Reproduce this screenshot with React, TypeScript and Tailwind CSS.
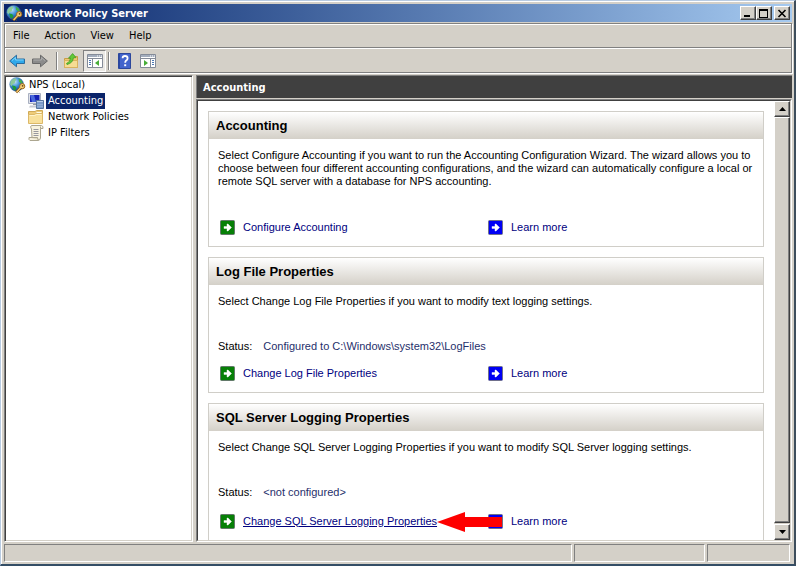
import type { ReactNode } from "react";

const tahoma = "font-['DejaVu_Sans_Condensed','DejaVu_Sans',sans-serif]";
const raised =
  "border border-t-white border-l-white border-r-[#404040] border-b-[#404040] bg-[#d4d0c8] shadow-[inset_-1px_-1px_0_#808080]";

function GlobeKeyIcon() {
  return (
    <svg width="17" height="17" viewBox="0 0 17 17" aria-hidden="true" className="shrink-0">
      <defs>
        <radialGradient id="globe" cx="35%" cy="30%" r="75%">
          <stop offset="0" stopColor="#c9e6fb" />
          <stop offset="0.5" stopColor="#3b8fd6" />
          <stop offset="1" stopColor="#0a2f7a" />
        </radialGradient>
      </defs>
      <circle cx="7.6" cy="7.4" r="6.9" fill="url(#globe)" stroke="#4c7ba6" strokeWidth="0.5" />
      <path d="M1.6 4.6Q3.4 1.6 6.4 1.2L7.4 2.6L6 4.4L5.8 6.2L3.8 7L2.8 9L1.2 8Z" fill="#8cc99a" />
      <path d="M3 8.6L6 9L7.4 10.6L6.4 13.6L4.4 12.8Z" fill="#1d9a3c" />
      <path d="M9.6 1.6L12.8 3.8L14 6.6L11.6 6L10 4.4Z" fill="#3fae48" />
      <path d="M11.6 10.6L7.2 15.4" stroke="#8a5a12" strokeWidth="2.6" />
      <circle cx="13.2" cy="9.2" r="2.6" fill="#f5cf7a" stroke="#9a6518" strokeWidth="1" />
      <path d="M11.8 10.4L7.6 15" stroke="#f5cf7a" strokeWidth="1.2" />
      <path d="M9 14L10.4 15.4" stroke="#9a6518" />
      <circle cx="13.6" cy="8.8" r="0.9" fill="#6b4510" />
    </svg>
  );
}

function ComputerIcon() {
  return (
    <svg width="16" height="16" viewBox="0 0 16 16" aria-hidden="true">
      <path d="M0.5 0.5H12.5V10.5H0.5Z" fill="#dfe2ea" stroke="#a9b0c0" />
      <path d="M2 2H11.5V9H2Z" fill="#1420b4" />
      <path d="M2 2H6L8 9H4Z" fill="#4a68dc" />
      <path d="M5 11H8V12H5Z" fill="#8f96a6" />
      <path d="M2 12.5H8V14.5H1Z" fill="#c6cad4" />
      <path d="M8.5 7.5H15.5V15.5H8.5Z" fill="#7d9cca" stroke="#56759f" />
      <path d="M9 8.5H15" stroke="#b8cdea" />
      <path d="M9 11.5H15M9 13.5H15" stroke="#92aed6" />
    </svg>
  );
}

function FolderIcon() {
  return (
    <svg width="16" height="16" viewBox="0 0 16 16" aria-hidden="true">
      <path d="M0.5 2.5H7L8.5 1.5H14.5V13.5H0.5Z" fill="#eecb78" stroke="#cfa955" />
      <path d="M8.5 3.5H13.5" stroke="#fffbe6" />
      <path d="M0.5 5.5H6.5L8 4.5H14.5V14.5H0.5Z" fill="#f8e09b" stroke="#dcb868" />
      <path d="M1.5 6.5H6.8L8.4 5.5H13.5" fill="none" stroke="#fff4cb" />
    </svg>
  );
}

function ScrollIcon() {
  return (
    <svg width="16" height="16" viewBox="0 0 16 16" aria-hidden="true">
      <path d="M4 0.5H13.5Q15.5 1 15 3.5H12.5V13Q12 15.5 10 15.5H2Q0.5 15 1 12.5H4L3.5 4Q1.5 1 4 0.5Z" fill="#f8f3e0" stroke="#aca690" />
      <path d="M1 12.5H9.5Q9.5 15.5 11 15" fill="#e3dcc2" stroke="#aca690" />
      <path d="M5.5 4.5H10.5M5.5 6.5H10.5M5.5 8.5H10.5M5.5 10.5H10.5" stroke="#98989e" />
      <path d="M12.5 3.5V1.5" stroke="#aca690" />
    </svg>
  );
}

function ToolArrow({ forward = false }: { forward?: boolean }) {
  const shape = forward
    ? "M0.5 5H8.5V1.2L15.4 7L8.5 12.8V9.5H0.5Z"
    : "M15.5 5H7.5V1.2L0.6 7L7.5 12.8V9.5H15.5Z";
  return (
    <svg width="16" height="14" viewBox="0 0 16 14" aria-hidden="true">
      <path d={shape} fill={forward ? "#8b8b8b" : "#2fa8ea"} stroke={forward ? "#686868" : "#2b6c9f"} strokeLinejoin="round" />
      <path d={forward ? "M1.5 6H9.4V3.4L13 6.6" : "M14.5 6H6.6V3.4L3 6.6"} fill="none" stroke={forward ? "#adadad" : "#7dd3f8"} />
    </svg>
  );
}

function UpFolderIcon() {
  return (
    <svg width="15" height="16" viewBox="0 0 15 16" aria-hidden="true">
      <path d="M0.5 5.5H6L7.5 3.5H13.5V14.5H0.5Z" fill="#edc873" stroke="#c99c45" />
      <path d="M0.5 7.5H13.5V14.5H0.5Z" fill="#f7dc93" stroke="#d9b25e" />
      <path d="M2.5 10.5Q6.5 9 6.5 5L4.5 5.2L8.6 0.6L12 4.6L9.4 4.8Q9 10 3 11.5Z" fill="#62c93a" stroke="#3c9a22" strokeWidth="0.8" />
    </svg>
  );
}

function PaneIcon({ play = false }: { play?: boolean }) {
  return (
    <svg width="16" height="14" viewBox="0 0 16 14" aria-hidden="true">
      <path d="M0.5 0.5H15.5V13.5H0.5Z" fill="#fff" stroke="#848b98" />
      <path d="M1 1H15V3H1Z" fill="#a3adbd" />
      <path d="M10 2H11M12 2H13M14 2H15" stroke="#fff" />
      <path d="M1 4.5H15" stroke="#848b98" />
      <path d={play ? "M10.5 5V13" : "M5.5 5V13"} stroke="#848b98" />
      <path d={play ? "M12 6.5H14M12 8.5H14M12 10.5H14" : "M2 6.5H4M2 8.5H4M2 10.5H4"} stroke="#4c78b4" />
      <path d={play ? "M4 6L8 9L4 12Z" : "M12 6L8 9L12 12Z"} fill="#48ad38" />
    </svg>
  );
}

function HelpIcon() {
  return (
    <svg width="13" height="16" viewBox="0 0 13 16" aria-hidden="true">
      <path d="M0.5 0.5H12.5V15.5H0.5Z" fill="#4264cc" stroke="#2c479c" />
      <path d="M1.5 1V15" stroke="#2b48a6" />
      <path d="M4.6 5.2Q4.6 3 7 3Q9.6 3 9.6 5.2Q9.6 6.6 8.2 7.6Q7.2 8.3 7.2 9.8" fill="none" stroke="#fff" strokeWidth="1.8" />
      <path d="M6.2 11.3H8.2V13.2H6.2Z" fill="#fff" />
    </svg>
  );
}

function GoIcon({ color }: { color: "green" | "blue" }) {
  return (
    <svg width="15" height="15" viewBox="0 0 15 15" aria-hidden="true" className="shrink-0">
      <rect x="0.5" y="0.5" width="14" height="14" rx="1" fill={color === "green" ? "#078007" : "#0000f4"} stroke={color === "green" ? "#63796a" : "#70708c"} />
      <path d="M4 6.5H7V4H8L11.5 7.5L8 11H7V8.5H4Z" fill="#fff" stroke="#fff" strokeWidth="0.4" />
    </svg>
  );
}

function Divider() {
  return <span className="mr-[6px] ml-2 h-[18px] w-[2px] border-l border-[#808080] bg-white" />;
}

function TreeItem({ icon, label, selected = false }: { icon: ReactNode; label: string; selected?: boolean }) {
  return (
    <li>
      <button className="flex h-4 items-center gap-[2px]">
        {icon}
        <span className={selected ? "bg-[#0a246a] px-[2px] leading-4 text-white" : "px-[2px] leading-4"}>{label}</span>
      </button>
    </li>
  );
}

function TaskLink({ label, color, underlined = false }: { label: string; color: "green" | "blue"; underlined?: boolean }) {
  return (
    <a href="#" className="flex h-4 w-fit items-center gap-2 text-[#000080]">
      <GoIcon color={color} />
      <span className={underlined ? "underline" : ""}>{label}</span>
    </a>
  );
}

type CardProps = {
  title: string;
  text: string;
  status?: string;
  action: string;
  marked?: boolean;
};

function Card({ title, text, status, action, marked = false }: CardProps) {
  return (
    <section className="shrink-0 border border-[#d0cec8] bg-white pb-[11px]">
      <h2 className="h-[27px] bg-linear-to-b from-white to-[#d4d0c8] px-[7px] text-[13px] leading-[27px] font-bold">{title}</h2>
      <p className="px-[9px] pt-[10px]">{text}</p>
      {status && (
        <dl className="flex gap-[11px] px-[9px] pt-8">
          <dt>Status:</dt>
          <dd className="text-[#1f2f6b]">{status}</dd>
        </dl>
      )}
      <div className={`relative grid grid-cols-[268px_1fr] px-[11px] ${status ? (marked ? "mt-[14px]" : "mt-3") : "mt-[31px]"}`}>
        <TaskLink color="green" label={action} underlined={marked} />
        <TaskLink color="blue" label="Learn more" />
        {marked && (
          <svg width="66" height="20" viewBox="0 0 66 20" aria-hidden="true" className="absolute -top-px left-[228px]">
            <path d="M0 10L28 0V5H65V15H28V20Z" fill="#fe0000" />
          </svg>
        )}
      </div>
    </section>
  );
}

function CaptionButton({ label, children }: { label: string; children: ReactNode }) {
  return (
    <button aria-label={label} className={`flex h-[14px] w-4 items-center justify-center ${raised}`}>
      <svg width="10" height="9" viewBox="0 0 10 9" aria-hidden="true" stroke="#000" fill="none" shapeRendering="crispEdges">
        {children}
      </svg>
    </button>
  );
}

function ScrollButton({ down = false }: { down?: boolean }) {
  return (
    <button aria-label={down ? "Scroll down" : "Scroll up"} className={`flex h-4 shrink-0 items-center justify-center ${raised}`}>
      <svg width="7" height="4" viewBox="0 0 7 4" aria-hidden="true">
        <path d={down ? "M0 0H7L3.5 4Z" : "M0 4H7L3.5 0Z"} />
      </svg>
    </button>
  );
}

const menus = ["File", "Action", "View", "Help"];
const statusCell = "border border-t-[#808080] border-l-[#808080] border-r-white border-b-white";

export default function App() {
  return (
    <div className={`flex h-screen flex-col border-t border-r-2 border-b-2 border-l border-t-[#b8cbe2] border-r-[#3e4e5c] border-b-[#344e66] border-l-[#b8cbe2] bg-[#d4d0c8] pt-[3px] pr-[2px] pl-[3px] text-[11px] leading-[13px] text-black shadow-[inset_1px_1px_0_#fff] ${tahoma}`}>
      <header className="shrink-0">
        <div className="flex h-[18px] items-center bg-linear-to-r from-[#0a246a] to-[#a6caf0] px-[2px]">
          <GlobeKeyIcon />
          <h1 className="ml-px flex-1 font-bold text-white">Network Policy Server</h1>
          <CaptionButton label="Minimize">
            <path d="M1 7H7" strokeWidth="2" />
          </CaptionButton>
          <CaptionButton label="Maximize">
            <path d="M0 1H9" strokeWidth="2" />
            <path d="M0.5 1V8.5H8.5V1" />
          </CaptionButton>
          <span className="w-[2px]" />
          <CaptionButton label="Close">
            <path d="M1.5 1L8.5 8M8.5 1L1.5 8" strokeWidth="1.6" shapeRendering="auto" />
          </CaptionButton>
        </div>
        <div className="mt-px border border-[#808080] shadow-[inset_1px_1px_0_#fff,1px_1px_0_#fff]">
          <nav className="flex h-6 items-center gap-[15px] border-b border-[#808080] px-2">
            {menus.map((m) => (
              <button key={m}>{m}</button>
            ))}
          </nav>
          <div className="flex h-6 items-center border-t border-white pl-1">
            <button aria-label="Back"><ToolArrow /></button>
            <button aria-label="Forward" className="ml-[7px]"><ToolArrow forward /></button>
            <Divider />
            <button aria-label="Up one level"><UpFolderIcon /></button>
            <button aria-label="Show console tree" className="ml-1 flex h-[22px] w-[23px] items-center justify-center border border-t-[#808080] border-l-[#808080] border-r-white border-b-white bg-[#eae8e4]">
              <PaneIcon />
            </button>
            <span className="mr-2 ml-[2px] h-[18px] w-[2px] border-l border-[#808080] bg-white" />
            <button aria-label="Help"><HelpIcon /></button>
            <button aria-label="Show action pane" className="ml-[9px]"><PaneIcon play /></button>
          </div>
        </div>
      </header>

      <main className="mt-[2px] flex min-h-0 flex-1 gap-[3px]">
        <nav className="w-[189px] shrink-0 border border-t-[#808080] border-l-[#808080] border-r-white border-b-white bg-white pt-px pl-1 shadow-[inset_1px_1px_0_#404040,inset_-1px_-1px_0_#d4d0c8]">
          <button className="flex h-4 items-center gap-[1px]">
            <GlobeKeyIcon />
            <span className="px-[2px] leading-4">NPS (Local)</span>
          </button>
          <ul className="pl-[19px]">
            <TreeItem icon={<ComputerIcon />} label="Accounting" selected />
            <TreeItem icon={<FolderIcon />} label="Network Policies" />
            <TreeItem icon={<ScrollIcon />} label="IP Filters" />
          </ul>
        </nav>

        <div className="flex min-w-0 flex-1 flex-col">
          <div className="h-[23px] shrink-0 border-t border-l border-[#808080] bg-[#404040] px-[6px] leading-[23px] font-bold text-white">Accounting</div>
          <div className="mt-px flex min-h-0 flex-1 border border-t-[#808080] border-l-[#808080] border-r-white border-b-white">
            <div className="flex min-w-0 flex-1 border border-t-[#404040] border-r-[#d4d0c8] border-b-[#d4d0c8] border-l-[#404040]">
              <div className="flex min-w-0 flex-1 flex-col gap-[10px] overflow-hidden bg-white px-[10px] pt-[10px] font-['Liberation_Sans',Arial,sans-serif]">
                <Card
                  title="Accounting"
                  text="Select Configure Accounting if you want to run the Accounting Configuration Wizard. The wizard allows you to choose between four different accounting configurations, and the wizard can automatically configure a local or remote SQL server with a database for NPS accounting."
                  action="Configure Accounting"
                />
                <Card
                  title="Log File Properties"
                  text="Select Change Log File Properties if you want to modify text logging settings."
                  status="Configured to C:\Windows\system32\LogFiles"
                  action="Change Log File Properties"
                />
                <Card
                  title="SQL Server Logging Properties"
                  text="Select Change SQL Server Logging Properties if you want to modify SQL Server logging settings."
                  status="<not configured>"
                  action="Change SQL Server Logging Properties"
                  marked
                />
              </div>
              <div className="flex w-4 shrink-0 flex-col bg-[#d4d0c8]">
                <ScrollButton />
                <div className={`mb-px flex-1 ${raised}`} />
                <ScrollButton down />
              </div>
            </div>
          </div>
        </div>
      </main>

      <footer className="mt-[2px] mb-[2px] flex h-[18px] shrink-0 gap-[2px] pr-[2px]">
        <div className={`flex-1 ${statusCell}`} />
        <div className={`w-[131px] ${statusCell}`} />
        <div className={`w-[83px] ${statusCell}`} />
      </footer>
    </div>
  );
}
